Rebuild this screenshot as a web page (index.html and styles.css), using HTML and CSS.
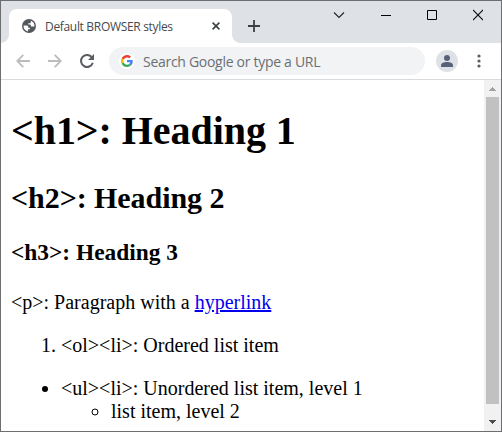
FILE: index.html
```html
<!DOCTYPE html>
<html lang="en">
<head>
<meta charset="utf-8">
<title>Default BROWSER styles</title>
<link rel="stylesheet" href="styles.css">
</head>
<body>
<div class="window">
  <header class="tabstrip">
    <div class="tab">
      <svg class="globe" width="14" height="14" viewBox="0 0 14 14"><circle cx="7" cy="7" r="7" fill="#53585d"/><path d="M1.6 6.600h3c1 0 1.600.7 1.600 1.600v.6h1.700v1.500H6v2.100A5.500 5.500 0 0 1 1.600 6.600zM8.800 1.800v1.400c0 .6-.5 1-1 1H6.200v1.300h1.400c.8 0 1.300.5 1.300 1.200v.9h3.500A5.500 5.500 0 0 0 8.800 1.800z" fill="#fff"/></svg>
      <span class="tab-title">Default BROWSER styles</span>
      <svg class="tab-close" width="8" height="8" viewBox="0 0 8 8"><path d="M.6.6l6.8 6.8M7.4.6L.6 7.4" stroke="#3c4043" stroke-width="1.6"/></svg>
    </div>
    <svg class="new-tab" width="12" height="12" viewBox="0 0 12 12"><path d="M6 0v12M0 6h12" stroke="#3c4043" stroke-width="1.8"/></svg>
    <div class="controls">
      <svg width="12" height="12" viewBox="0 0 12 12"><path d="M1 3.5L6 8.5l5-5" fill="none" stroke="#222" stroke-width="1.1"/></svg>
      <svg width="10" height="12" viewBox="0 0 10 12"><path d="M0 6.5h10" stroke="#000"/></svg>
      <svg width="10" height="12" viewBox="0 0 10 12"><path d="M.5 1.5h9v9h-9z" fill="none" stroke="#000"/></svg>
      <svg width="10" height="12" viewBox="0 0 10 12"><path d="M0 1l10 10M10 1L0 11" stroke="#111" stroke-width="1.1"/></svg>
    </div>
  </header>
  <div class="toolbar">
    <svg class="back" width="14" height="14" viewBox="0 0 14 14"><path d="M14 7H1.5M7.3.8L1.2 7l6.1 6.2" fill="none" stroke="#babcbe" stroke-width="1.8"/></svg>
    <svg class="forward" width="14" height="14" viewBox="0 0 14 14"><path d="M0 7h12.5M6.7.8L12.8 7l-6.1 6.2" fill="none" stroke="#babcbe" stroke-width="1.8"/></svg>
    <svg class="reload" width="14" height="14" viewBox="0 0 14 14"><path d="M11.6 3A6 6 0 1 0 12.8 8.8" fill="none" stroke="#5a5e63" stroke-width="2"/><path d="M14 0v6H8z" fill="#5a5e63"/></svg>
    <div class="omnibox">
      <span class="search-logo"><svg width="12" height="12" viewBox="0 0 48 48"><path fill="#EA4335" d="M24 9.5c3.5 0 6.700 1.200 9.200 3.600l6.900-6.900C35.900 2.400 30.500 0 24 0 14.600 0 6.500 5.400 2.600 13.200l8 6.200C12.400 13.700 17.700 9.500 24 9.500z"/><path fill="#4285F4" d="M47 24.600c0-1.600-.2-3.100-.4-4.600H24v9h12.900c-.6 3-2.200 5.500-4.700 7.200l7.700 6C44.400 38 47 31.800 47 24.600z"/><path fill="#FBBC05" d="M10.500 28.600a14.500 14.500 0 0 1 0-9.200l-8-6.200a24 24 0 0 0 0 21.600z"/><path fill="#34A853" d="M24 48c6.500 0 11.900-2.100 15.900-5.800l-7.700-6c-2.200 1.500-4.900 2.300-8.200 2.300-6.300 0-11.600-4.200-13.500-9.900l-8 6.200C6.500 42.600 14.600 48 24 48z"/></svg></span>
      <span class="placeholder">Search Google or type a URL</span>
    </div>
    <div class="avatar"><svg width="12" height="12" viewBox="0 0 12 12"><circle cx="6" cy="3" r="3" fill="#56617a"/><path d="M0 12v-1.800C0 8.200 3 7 6 7s6 1.200 6 3.200V12z" fill="#56617a"/></svg></div>
    <svg class="menu" width="4" height="14" viewBox="0 0 4 14"><g fill="#5a5e63"><circle cx="2" cy="2" r="1.600"/><circle cx="2" cy="7" r="1.600"/><circle cx="2" cy="12" r="1.600"/></g></svg>
  </div>
  <div class="viewport">
    <main class="page">
      <h1>&lt;h1&gt;: Heading 1</h1>
      <h2>&lt;h2&gt;: Heading 2</h2>
      <h3>&lt;h3&gt;: Heading 3</h3>
      <p>&lt;p&gt;: Paragraph with a <a href="#">hyperlink</a></p>
      <ol><li>&lt;ol&gt;&lt;li&gt;: Ordered list item</li></ol>
      <ul><li>&lt;ul&gt;&lt;li&gt;: Unordered list item, level 1
        <ul><li>list item, level 2</li></ul>
      </li></ul>
    </main>
    <div class="scrollbar">
      <svg width="17" height="17" viewBox="0 0 17 17" shape-rendering="crispEdges"><path d="M8 7h1v1h1v1h1v1h1v1H5v-1h1V9h1V8h1z" fill="#a3a3a3"/></svg>
      <div class="thumb"></div>
      <svg width="17" height="17" viewBox="0 0 17 17" shape-rendering="crispEdges"><path d="M5 6h7v1h-1v1h-1v1H9v1H8V9H7V8H6V7H5z" fill="#505050"/></svg>
    </div>
  </div>
</div>
</body>
</html>
```
FILE: styles.css
```css
* { box-sizing: border-box; }
body { margin: 0; overflow: hidden; }
svg { display: block; flex: none; }

.window {
  display: flex;
  flex-direction: column;
  width: 502px;
  height: 432px;
  border: 1px solid #6e6e70;
  background: #fff;
  overflow: hidden;
}

.tabstrip {
  display: flex;
  flex: none;
  height: 42px;
  padding: 8px 18px 0 8px;
  background: #dee1e6;
  font-family: "Open Sans", sans-serif;
}
.tab {
  position: relative;
  display: flex;
  align-items: center;
  width: 223px;
  height: 34px;
  padding: 0 12px 0 13px;
  border-radius: 8px 8px 0 0;
  background: #fff;
}
.tab::before,
.tab::after {
  content: "";
  position: absolute;
  bottom: 0;
  width: 8px;
  height: 8px;
}
.tab::before { left: -8px; background: radial-gradient(circle at 0 0, transparent 7.5px, #fff 8px); }
.tab::after { right: -8px; background: radial-gradient(circle at 100% 0, transparent 7.5px, #fff 8px); }
.tab-title {
  flex: 1;
  margin-left: 9px;
  color: #45494d;
  font-size: 12px;
  letter-spacing: -0.32px;
  white-space: nowrap;
}
.new-tab { margin: 11px 0 0 16px; }
.controls {
  display: flex;
  gap: 36px;
  margin-left: auto;
}

.toolbar {
  display: flex;
  flex: none;
  align-items: center;
  height: 37px;
  padding: 0 12px 0 15px;
  border-bottom: 1px solid #d9dadb;
}
.forward { margin-left: 18px; }
.reload { margin-left: 18px; }
.omnibox {
  display: flex;
  align-items: center;
  width: 316px;
  height: 28px;
  margin-left: 15px;
  padding-left: 10px;
  border-radius: 14px;
  background: #f1f3f4;
  font-family: "Open Sans", sans-serif;
}
.search-logo {
  display: flex;
  align-items: center;
  justify-content: center;
  width: 16px;
  height: 16px;
  border-radius: 50%;
  background: #fff;
}
.placeholder {
  margin-left: 8px;
  color: #6b6f74;
  font-size: 14px;
  letter-spacing: -0.29px;
  white-space: nowrap;
}
.avatar {
  display: flex;
  align-items: center;
  justify-content: center;
  width: 22px;
  height: 22px;
  margin-left: 11px;
  border-radius: 50%;
  background: #dee1e6;
}
.menu { margin-left: auto; margin-right: 8px; }

.viewport {
  display: flex;
  flex: 1;
  min-height: 0;
}
.page {
  flex: 1;
  height: 351px;
  padding: 0 10px;
  overflow: hidden;
  font: 20px "Liberation Serif", serif;
  color: #000;
}
.page h1 { font-size: 40px; margin: 26.8px 0; letter-spacing: -0.06px; }
.page h2 { font-size: 30px; margin: 24.9px 0; letter-spacing: -0.05px; }
.page h3 { font-size: 23.4px; margin: 23.4px 0 24.4px; }
.page p { margin: 20px 0; }
.page a { color: #0000ee; }
.page ol,
.page ul { margin: 20px 0; padding-left: 50px; }
.page ul ul { margin: 0; }

.scrollbar {
  display: flex;
  flex-direction: column;
  justify-content: space-between;
  width: 17px;
  background: #f1f1f1;
}
.thumb { flex: 1; margin: 0 2px 10px; background: #c1c1c1; }
```
